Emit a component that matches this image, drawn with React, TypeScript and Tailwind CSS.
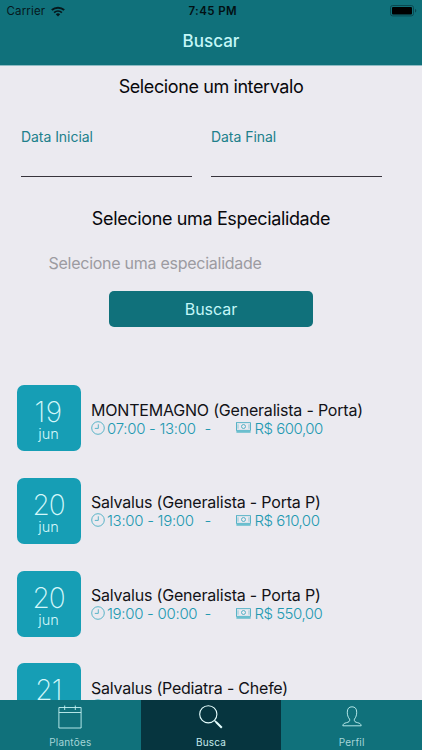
import React from "react";

type Shift = { day: string; daySpacing: string; name: string; nameSpacing: string; hours: string; price: string };

const shifts: Shift[] = [
  { day: "19", daySpacing: "tracking-[0.6px]", name: "MONTEMAGNO (Generalista - Porta)", nameSpacing: "tracking-[-0.2px]", hours: "07:00 - 13:00", price: "R$ 600,00" },
  { day: "20", daySpacing: "tracking-[-1.2px]", name: "Salvalus (Generalista - Porta P)", nameSpacing: "tracking-[-0.2px]", hours: "13:00 - 19:00", price: "R$ 610,00" },
  { day: "20", daySpacing: "tracking-[-1.2px]", name: "Salvalus (Generalista - Porta P)", nameSpacing: "tracking-[-0.2px]", hours: "19:00 - 00:00", price: "R$ 550,00" },
  { day: "21", daySpacing: "tracking-[-0.8px]", name: "Salvalus (Pediatra - Chefe)", nameSpacing: "tracking-[-0.22px]", hours: "07:00 - 19:00", price: "R$ 900,00" },
];

function WifiIcon() {
  return (
    <svg width="14" height="11" viewBox="0 0 14 11" fill="none" stroke="#06181c">
      <path d="M.8 4.1a9.2 9.2 0 0 1 12.4 0" strokeWidth="2" />
      <path d="M3.1 6.6a5.8 5.8 0 0 1 7.8 0" strokeWidth="1.8" />
      <path d="M7 10.6 4.8 8.3a3.2 3.2 0 0 1 4.4 0Z" fill="#06181c" stroke="none" />
    </svg>
  );
}

function BatteryIcon() {
  return (
    <svg width="27" height="12" viewBox="0 0 27 12" fill="none">
      <rect x=".5" y=".5" width="23" height="10.4" rx="2.2" stroke="#0a4850" />
      <rect x="2" y="2" width="20" height="7.4" rx="1" fill="#000" />
      <path d="M25 4v3.6c.8-.3 1.3-1 1.3-1.8S25.8 4.3 25 4Z" fill="#0a4850" />
    </svg>
  );
}

function ClockIcon() {
  return (
    <svg className="mb-[2px]" width="14" height="14" viewBox="0 0 14 14" fill="none" stroke="#35a6bd" strokeWidth=".8">
      <circle cx="7" cy="7" r="6.3" />
      <path d="M7.3 3.3v4.1H3.8" />
    </svg>
  );
}

function CashIcon() {
  return (
    <svg className="mb-[1px]" width="15" height="12" viewBox="0 0 15 12" fill="none" stroke="#35a6bd" strokeWidth=".8">
      <rect x=".5" y=".7" width="14" height="7.6" />
      <circle cx="7.5" cy="4.5" r="2" />
      <path d="M2 2.3v4.4M13 2.3v4.4" strokeWidth=".5" />
      <path d="M.4 8.3h14.2v2.500H.4Z" fill="#6bbfce" stroke="none" />
    </svg>
  );
}

function CalendarIcon() {
  return (
    <svg width="24" height="24" viewBox="0 0 24 24" fill="none" stroke="#c5f3f3" strokeWidth=".9">
      <path d="M.9 2.500h22.200v20.500H.9ZM.9 7.500h22.200M6.700.5v4.500M17.300.5v4.500" />
    </svg>
  );
}

function SearchIcon() {
  return (
    <svg width="24" height="24" viewBox="0 0 24 24" fill="none" stroke="#e6ffff">
      <circle cx="9.3" cy="9.3" r="8.6" strokeWidth="1.1" />
      <path d="m15.500 15.500 2 2" strokeWidth="1.200" />
      <path d="m17 17 5.800 5.800" strokeWidth="2" />
    </svg>
  );
}

function PersonIcon() {
  return (
    <svg width="20" height="21" viewBox="0 0 20 21" fill="none" stroke="#c5f3f3" strokeWidth=".9">
      <path d="M7.6 13.2C6 11.3 5.3 9 5.3 6.2 5.3 2.6 7 .8 10 .8s4.700 1.800 4.700 5.400c0 2.800-.7 5.100-2.300 7-.5 2.400 1 2.900 3.200 3.500 2.400.6 3.300 1.200 3.600 3.100H.8c.3-1.900 1.200-2.500 3.600-3.100 2.200-.6 3.700-1.100 3.200-3.500Z" />
    </svg>
  );
}

function DateField({ label }: { label: string }) {
  return (
    <div className="h-[49px] w-[171px] border-b border-[#37343c]">
      <span className="block text-[14px] leading-[18px] tracking-[-0.05px] text-[#20808b]">{label}</span>
    </div>
  );
}

function ShiftRow({ shift }: { shift: Shift }) {
  return (
    <div className="flex h-[92.7px] shrink-0 items-start pl-[16.5px]">
      <div className="flex h-[66px] w-16 shrink-0 flex-col items-center rounded-[7px] bg-[#169eb5] pt-[12px] text-[#d4f7fa]">
        <span className={`text-[28px] leading-[30px] font-extralight ${shift.daySpacing}`}>{shift.day}</span>
        <span className="-mt-px text-[14.5px] leading-[15px] font-light">jun</span>
      </div>
      <div className="flex flex-col pt-[14.5px] pl-[10.5px] whitespace-nowrap">
        <span className={`text-[16px] leading-[20px] text-[#121217] ${shift.nameSpacing}`}>{shift.name}</span>
        <div className="flex h-[18px] items-center text-[15px] leading-[18px] font-light text-[#2299b0]">
          <ClockIcon />
          <span className="ml-[2px] w-[88px] tracking-[-0.3px]">{shift.hours}</span>
          <span className="ml-[9.5px] w-[31.5px]">-</span>
          <CashIcon />
          <span className="ml-[3.5px] tracking-[-0.5px]">{shift.price}</span>
        </div>
      </div>
    </div>
  );
}

function Tab({ label, active, children }: { label: string; active?: boolean; children: React.ReactNode }) {
  return (
    <div className={`flex flex-1 flex-col items-center ${active ? "bg-[#06353f]" : "bg-[#10717b]"}`}>
      <div className="flex h-[36px] items-center pb-[3px]">{children}</div>
      <span className={`text-[10px] leading-[13px] tracking-[0.2px] ${active ? "text-[#c4eaec]" : "text-[#a5d5d8]"}`}>{label}</span>
    </div>
  );
}

export default function App() {
  return (
    <div className="flex h-[750px] w-[422px] flex-col overflow-hidden bg-[#ebeaf0] font-['Inter',sans-serif]">
      <header className="h-[66px] shrink-0 border-b border-[#8fbcc4] bg-[#10717b]">
        <div className="grid h-[22px] grid-cols-3 items-center pr-[5px] pl-[6.5px] text-[11.5px] text-[#06181c]">
          <div className="flex items-center gap-[6px]">
            <span className="w-[38.5px] pt-px tracking-[0.15px]">Carrier</span>
            <WifiIcon />
          </div>
          <span className="pt-px pl-[2px] text-center font-semibold tracking-[0.4px] text-[#021013]">7:45 PM</span>
          <div className="flex justify-end"><BatteryIcon /></div>
        </div>
        <h1 className="mt-[8px] text-center text-[17px] leading-[22px] font-medium text-[#c4f7f8]">Buscar</h1>
      </header>

      <main className="flex min-h-0 flex-1 flex-col overflow-hidden">
        <h2 className="mt-[9px] text-center text-[18px] leading-[24px] tracking-[-0.4px] text-[#08080c]">Selecione um intervalo</h2>
        <div className="mt-[29px] flex gap-[19px] pl-[21px]">
          <DateField label="Data Inicial" />
          <DateField label="Data Final" />
        </div>
        <h2 className="mt-[30px] text-center text-[18px] leading-[24px] tracking-[-0.36px] text-[#08080c]">Selecione uma Especialidade</h2>
        <span className="mt-[21px] ml-[48.5px] text-[16px] leading-[22px] tracking-[-0.26px] text-[#9c9ba1]">Selecione uma especialidade</span>
        <button className="mt-[17px] h-[36px] w-[204px] shrink-0 self-center rounded-[5px] bg-[#10717b] text-[16px] text-[#c4f7f8]">Buscar</button>
        <section className="mt-[58.2px] flex min-h-0 flex-1 flex-col overflow-hidden">
          {shifts.map((shift, i) => (
            <ShiftRow key={i} shift={shift} />
          ))}
        </section>
      </main>

      <nav className="flex h-[50px] shrink-0">
        <Tab label="Plantões"><CalendarIcon /></Tab>
        <Tab label="Busca" active><SearchIcon /></Tab>
        <Tab label="Perfil"><PersonIcon /></Tab>
      </nav>
    </div>
  );
}
